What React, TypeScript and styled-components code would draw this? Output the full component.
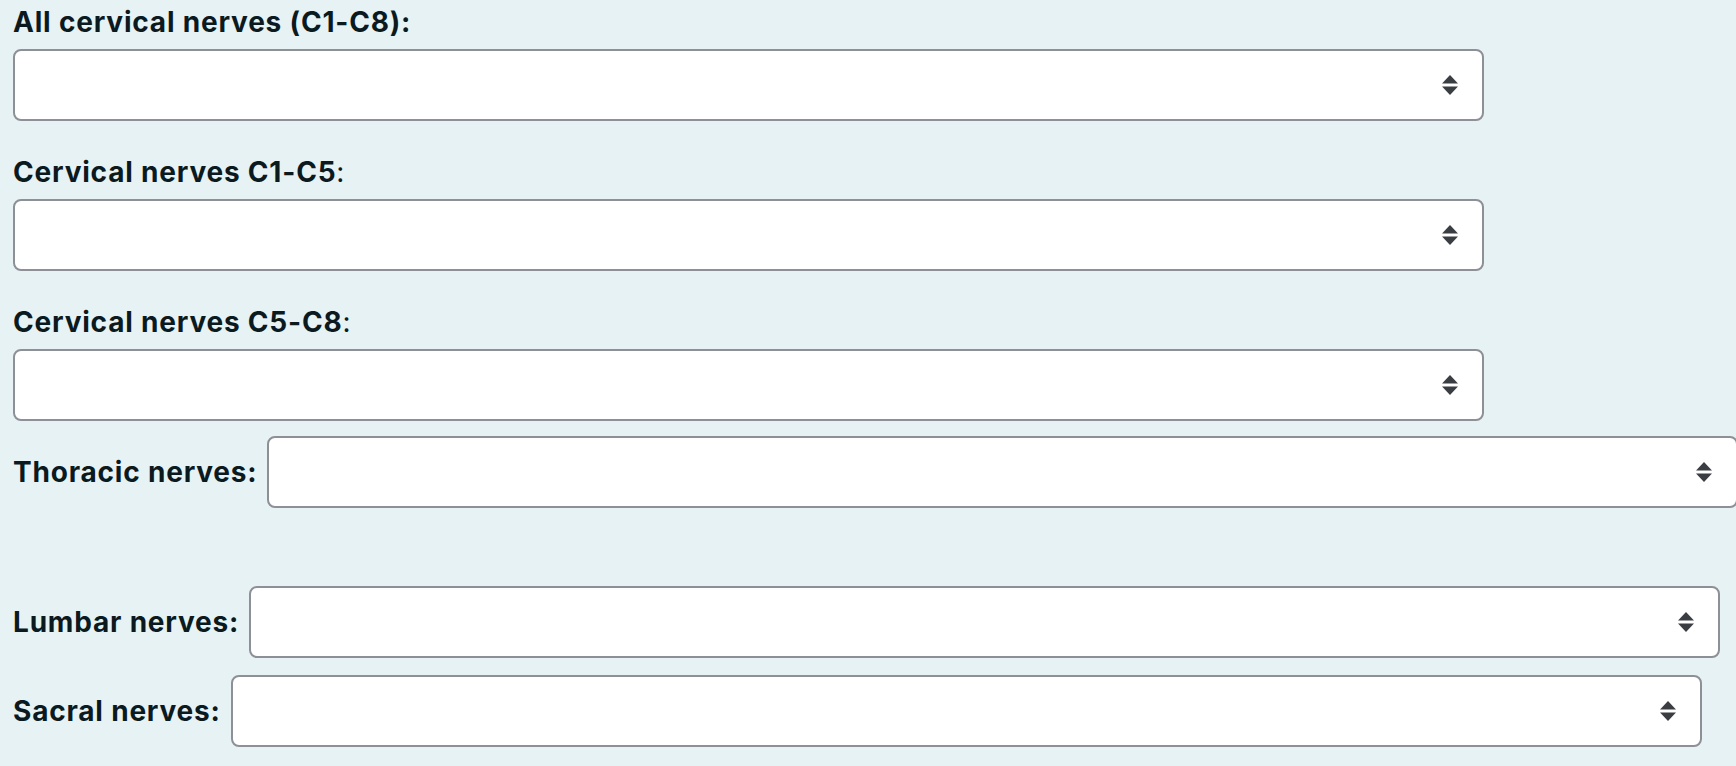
import React from "react";
import styled, { createGlobalStyle } from "styled-components";

const GlobalStyle = createGlobalStyle`
  html, body {
    margin: 0;
    padding: 0;
    background: #e7f2f4;
  }
  body {
    font-family: Inter, "Liberation Sans", Arial, sans-serif;
    color: #0b1a1f;
    overflow: hidden;
  }
`;

const Page = styled.div`
  display: flex;
  flex-direction: column;
  align-items: flex-start;
  padding: 6px 0 0 13px;
  width: 1736px;
  height: 766px;
  box-sizing: border-box;
`;

const StackedGroup = styled.div<{ $gapTop: number }>`
  display: flex;
  flex-direction: column;
  align-items: flex-start;
  gap: 11px;
  margin-top: ${(p) => p.$gapTop}px;
`;

const InlineRow = styled.div<{ $gapTop: number }>`
  display: flex;
  align-items: center;
  gap: 10px;
  margin-top: ${(p) => p.$gapTop}px;
`;

const Label = styled.label`
  display: block;
  font-size: 28px;
  line-height: 32px;
  letter-spacing: 0.8px;
  white-space: nowrap;
  color: #0b1a1f;
`;

const Strong = styled.span`
  font-weight: 700;
`;

const Colon = styled.span<{ $bold?: boolean }>`
  font-weight: ${(p) => (p.$bold ? 700 : 400)};
`;

const SelectWrap = styled.div`
  position: relative;
  width: 1471px;
  height: 72px;
  flex: none;
`;

const Select = styled.select`
  appearance: none;
  -webkit-appearance: none;
  display: block;
  width: 100%;
  height: 100%;
  box-sizing: border-box;
  border: 2px solid #8d9096;
  border-radius: 8px;
  background: #ffffff;
  font-family: inherit;
  font-size: 26px;
  color: #0b1a1f;
  padding: 0 60px 0 20px;
  outline: none;
`;

const Arrow = styled.svg`
  position: absolute;
  right: 26px;
  top: 50%;
  width: 16px;
  height: 20px;
  transform: translateY(-50%);
  pointer-events: none;
`;

function UpDown() {
  return (
    <Arrow viewBox="0 0 16 20" aria-hidden="true">
      <path d="M8 0 L16 8.5 L0 8.5 Z" fill="#3a3d41" />
      <path d="M0 11.5 L16 11.5 L8 20 Z" fill="#3a3d41" />
    </Arrow>
  );
}

function NerveSelect({ id }: { id: string }) {
  return (
    <SelectWrap>
      <Select id={id} defaultValue="">
        <option value=""></option>
      </Select>
      <UpDown />
    </SelectWrap>
  );
}

export default function App() {
  return (
    <>
      <GlobalStyle />
      <Page>
        <StackedGroup $gapTop={0}>
          <Label htmlFor="all-cervical">
            <Strong>All cervical nerves (C1-C8)</Strong>
            <Colon $bold>:</Colon>
          </Label>
          <NerveSelect id="all-cervical" />
        </StackedGroup>
        <StackedGroup $gapTop={35}>
          <Label htmlFor="c1c5">
            <Strong>Cervical nerves C1-C5</Strong>
            <Colon>:</Colon>
          </Label>
          <NerveSelect id="c1c5" />
        </StackedGroup>
        <StackedGroup $gapTop={35}>
          <Label htmlFor="c5c8">
            <Strong>Cervical nerves C5-C8</Strong>
            <Colon>:</Colon>
          </Label>
          <NerveSelect id="c5c8" />
        </StackedGroup>
        <InlineRow $gapTop={15}>
          <Label htmlFor="thoracic">
            <Strong>Thoracic nerves:</Strong>
          </Label>
          <NerveSelect id="thoracic" />
        </InlineRow>
        <InlineRow $gapTop={78}>
          <Label htmlFor="lumbar">
            <Strong>Lumbar nerves:</Strong>
          </Label>
          <NerveSelect id="lumbar" />
        </InlineRow>
        <InlineRow $gapTop={17}>
          <Label htmlFor="sacral">
            <Strong>Sacral nerves:</Strong>
          </Label>
          <NerveSelect id="sacral" />
        </InlineRow>
      </Page>
    </>
  );
}
